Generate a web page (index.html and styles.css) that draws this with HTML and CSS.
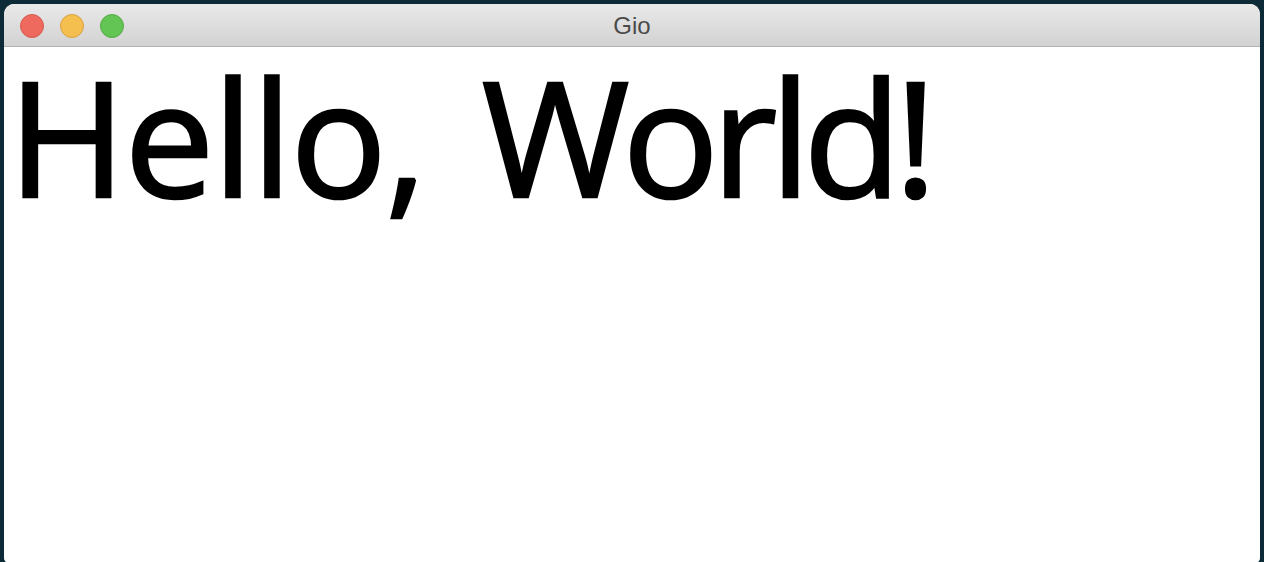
FILE: index.html
```html
<!DOCTYPE html>
<html>
<head>
<meta charset="utf-8">
<link rel="stylesheet" href="styles.css">
</head>
<body>
<div class="desktop">
  <div class="window">
    <div class="titlebar">
      <div class="lights">
        <span class="light red"></span>
        <span class="light yellow"></span>
        <span class="light green"></span>
      </div>
      <div class="title">Gio</div>
    </div>
    <div class="content">
      <div class="hello"><span class="w1">Hello,</span> <span class="w2">World!</span></div>
    </div>
  </div>
</div>
</body>
</html>
```

FILE: styles.css
```css
html, body {
  margin: 0;
  padding: 0;
  background: #0c2b36;
  overflow: hidden;
}
.desktop {
  width: 1264px;
  height: 562px;
  padding: 4px 4px 0 4px;
  box-sizing: border-box;
  display: flex;
}
.window {
  flex: 1;
  height: 560px;
  display: flex;
  flex-direction: column;
  border-radius: 10px 10px 7px 7px;
  overflow: hidden;
  background: #ffffff;
}
.titlebar {
  position: relative;
  height: 42px;
  flex: none;
  background: linear-gradient(#e9e9e9, #d2d2d2);
  border-bottom: 1px solid #b3b3b3;
  display: flex;
  align-items: center;
  justify-content: center;
}
.lights {
  position: absolute;
  left: 16px;
  top: 10px;
  display: flex;
  gap: 16px;
}
.light {
  width: 22px;
  height: 22px;
  border-radius: 50%;
  border: 1px solid;
  display: block;
}
.red { background: #ee6a5f; border-color: #d7584e; }
.yellow { background: #f5bf4f; border-color: #d8a140; }
.green { background: #62c554; border-color: #53a944; }
.title {
  font-family: "Liberation Sans", Arial, sans-serif;
  font-size: 24px;
  color: #4a4a4a;
  line-height: 28px;
  margin-top: 2px;
}
.content {
  flex: 1;
  background: #ffffff;
}
.hello {
  font-family: "Open Sans", sans-serif;
  font-size: 160px;
  font-weight: 400;
  -webkit-text-stroke: 2.5px #000000;
  word-spacing: 15px;
  line-height: 1;
  color: #000000;
  padding-left: 4px;
  margin-top: 8px;
  white-space: nowrap;
}
.w1 { letter-spacing: -1.5px; }
.w2 { letter-spacing: -7px; }
```
